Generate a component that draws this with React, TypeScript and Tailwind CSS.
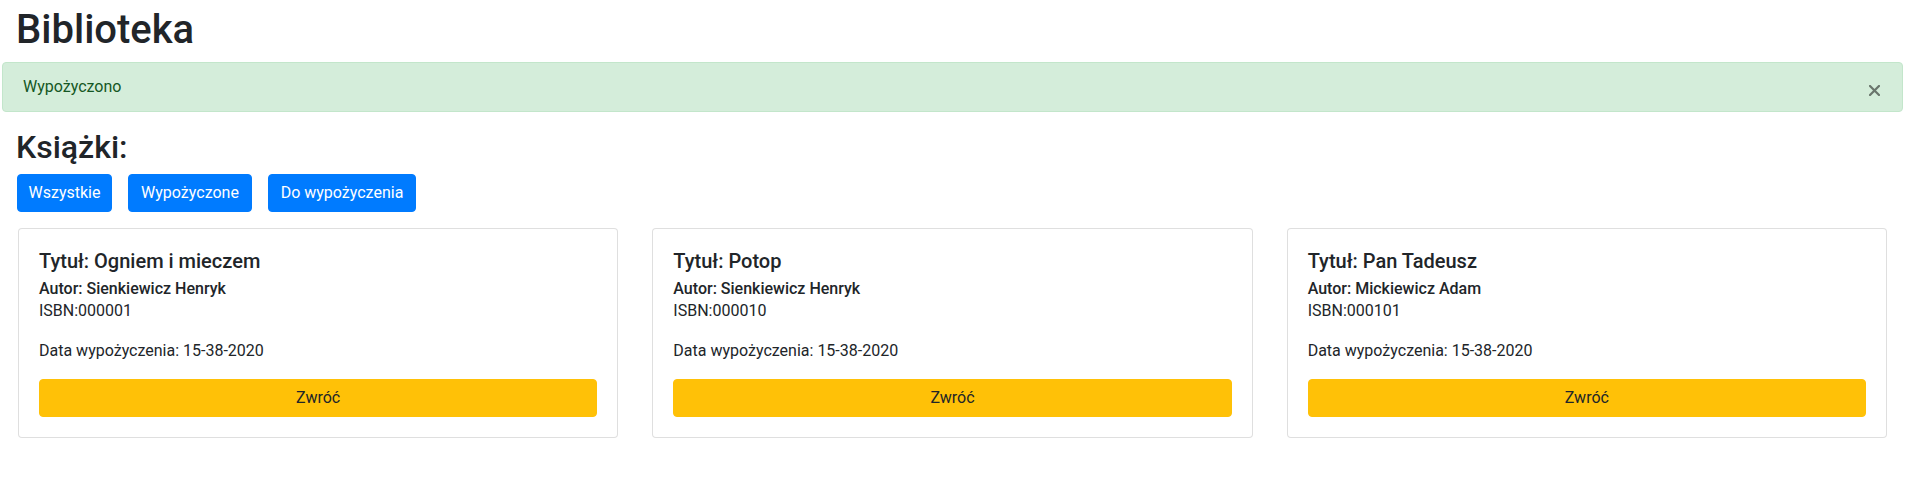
import React from "react";

type Book = {
  title: string;
  author: string;
  isbn: string;
  date: string;
};

const books: Book[] = [
  { title: "Ogniem i mieczem", author: "Sienkiewicz Henryk", isbn: "000001", date: "15-38-2020" },
  { title: "Potop", author: "Sienkiewicz Henryk", isbn: "000010", date: "15-38-2020" },
  { title: "Pan Tadeusz", author: "Mickiewicz Adam", isbn: "000101", date: "15-38-2020" },
];

function BookCard({ book }: { book: Book }) {
  return (
    <div className="rounded border border-black/[0.125] bg-white p-5">
      <h5 className="mb-3 text-xl leading-6 font-medium">Tytuł: {book.title}</h5>
      <h6 className="-mt-1.5 text-base leading-[19.2px] font-medium">Autor: {book.author}</h6>
      <p className="mb-4 leading-6">ISBN:{book.isbn}</p>
      <p className="mb-4 leading-6">Data wypożyczenia: {book.date}</p>
      <button className="h-[38px] w-full rounded border border-[#ffc107] bg-[#ffc107] text-base leading-6 text-[#212529]">
        Zwróć
      </button>
    </div>
  );
}

export default function App() {
  const filters = [
    { label: "Wszystkie", w: "w-[95px]" },
    { label: "Wypożyczone", w: "w-[124px]" },
    { label: "Do wypożyczenia", w: "w-[148px]" },
  ];

  return (
    <div className="min-h-screen bg-white font-['Roboto','Liberation_Sans',sans-serif] text-base leading-6 text-[#212529]">
      <h1 className="mb-2 ml-[16px] pt-[6px] text-[40px] leading-[48px] font-medium">Biblioteka</h1>

      {/* alert */}
      <div className="mb-4 ml-[2px] mr-[10px] flex items-center justify-between rounded border border-[#c3e6cb] bg-[#d4edda] px-5 py-3 text-[#155724]">
        <span className="leading-6">Wypożyczono</span>
        <svg width="11" height="11" viewBox="0 0 11 11" className="mr-[2px] mt-[7px] opacity-50">
          <path d="M1 1 L10 10 M10 1 L1 10" stroke="#000" strokeWidth="2.2" strokeLinecap="square" />
        </svg>
      </div>

      <h2 className="mb-2 ml-[16px] text-[32px] leading-[38.4px] font-medium">Książki:</h2>

      <div className="ml-[17px] flex gap-4">
        {filters.map((f) => (
          <button
            key={f.label}
            className={`${f.w} h-[38px] rounded border border-[#007bff] bg-[#007bff] text-base leading-6 text-white`}
          >
            {f.label}
          </button>
        ))}
      </div>

      <div className="mt-4 ml-[18px] mr-[26px] grid grid-cols-3 gap-[34px]">
        {books.map((b) => (
          <BookCard key={b.isbn} book={b} />
        ))}
      </div>
    </div>
  );
}
